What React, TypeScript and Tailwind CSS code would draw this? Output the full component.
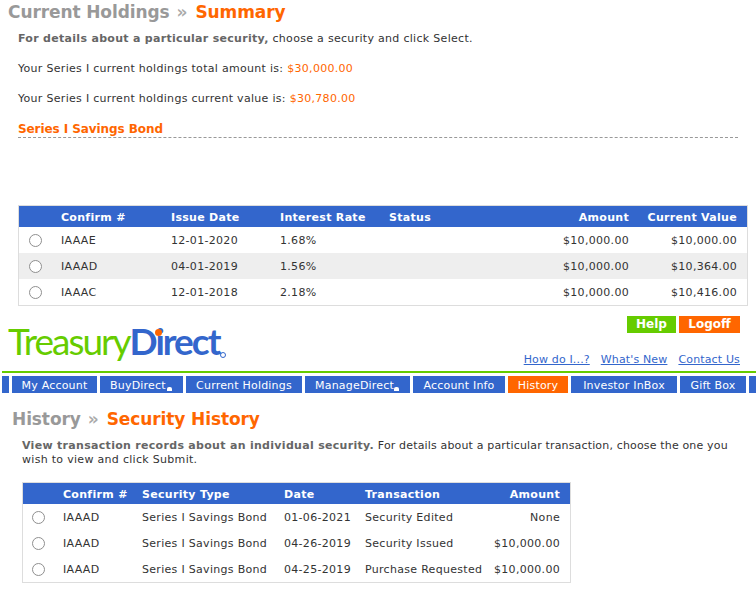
const holdings = [
  { confirm: "IAAAE", date: "12-01-2020", rate: "1.68%", amount: "$10,000.00", value: "$10,000.00" },
  { confirm: "IAAAD", date: "04-01-2019", rate: "1.56%", amount: "$10,000.00", value: "$10,364.00" },
  { confirm: "IAAAC", date: "12-01-2018", rate: "2.18%", amount: "$10,000.00", value: "$10,416.00" },
];

const history = [
  { date: "01-06-2021", transaction: "Security Edited", amount: "None" },
  { date: "04-26-2019", transaction: "Security Issued", amount: "$10,000.00" },
  { date: "04-25-2019", transaction: "Purchase Requested", amount: "$10,000.00" },
];

const nav = [
  { name: "My Account", w: "w-[85px]" },
  { name: "BuyDirect", w: "w-[83px]", arrow: true },
  { name: "Current Holdings", w: "w-[116px]" },
  { name: "ManageDirect", w: "w-[105px]", arrow: true },
  { name: "Account Info", w: "w-[92px]" },
  { name: "History", w: "w-[60px]", active: true },
  { name: "Investor InBox", w: "w-[106px]" },
  { name: "Gift Box", w: "w-[66px]" },
];

function Radio() {
  return <span className="block w-[13px] h-[13px] rounded-full border border-[#8f8f8f] bg-white" />;
}

function Crumb({ first, second }: { first: string; second: string }) {
  return (
    <h1 className="flex text-[17px] leading-[24px] font-bold tracking-[-0.1px] whitespace-nowrap">
      <span className="text-[#999999]">{first}</span>
      <span className="ml-[7px] mr-[8px] text-[#aaaaaa]">»</span>
      <span className="text-[#ff6600]">{second}</span>
    </h1>
  );
}

export default function App() {
  return (
    <div className="w-[756px] h-[592px] overflow-hidden bg-white text-[#333333] text-[11px] tracking-[0.3px] font-['DejaVu_Sans','Verdana',sans-serif]">
      {/* summary */}
      <div className="pl-2 h-[24px]">
        <Crumb first="Current Holdings" second="Summary" />
      </div>
      <div className="pl-[18px] pr-2">
        <p className="mt-[7px] leading-[16px]">
          <b className="text-[#666666]">For details about a particular security,</b> choose a security and click Select.
        </p>
        <p className="mt-[14px] leading-[16px]">
          Your Series I current holdings total amount is: <span className="text-[#ff6600]">$30,000.00</span>
        </p>
        <p className="mt-[14px] leading-[16px]">
          Your Series I current holdings current value is: <span className="text-[#ff6600]">$30,780.00</span>
        </p>
        <div className="mt-[13px] w-[720px] h-[18px] border-b border-dashed border-[#999999] text-[12px] leading-[18px] tracking-[-0.08px] font-bold text-[#ff6600]">
          Series I Savings Bond
        </div>
        <table className="mt-[67px] w-[730px] border border-[#dddddd] border-separate border-spacing-0 table-fixed">
          <thead>
            <tr className="h-[21px] bg-[#3366cc] text-white text-left">
              <th className="w-[42px]" />
              <th className="w-[110px] pt-[3px] font-bold">Confirm #</th>
              <th className="w-[109px] pt-[3px] font-bold">Issue Date</th>
              <th className="w-[109px] pt-[3px] font-bold">Interest Rate</th>
              <th className="w-[130px] pt-[3px] font-bold">Status</th>
              <th className="w-[120px] pt-[3px] pr-[10px] text-right font-bold">Amount</th>
              <th className="pt-[3px] pr-[10px] text-right font-bold">Current Value</th>
            </tr>
          </thead>
          <tbody>
            {holdings.map((row, i) => (
              <tr key={row.confirm} className={i === 1 ? "h-[26px] bg-[#eeeeee]" : "h-[26px]"}>
                <td className="pl-[10px]"><Radio /></td>
                <td className="pt-[2px]">{row.confirm}</td>
                <td className="pt-[2px]">{row.date}</td>
                <td className="pt-[2px]">{row.rate}</td>
                <td />
                <td className="pt-[2px] pr-[10px] text-right">{row.amount}</td>
                <td className="pt-[2px] pr-[10px] text-right">{row.value}</td>
              </tr>
            ))}
          </tbody>
        </table>
      </div>

      {/* header */}
      <div className="flex justify-between h-[65px] pl-2 pr-4">
        <div className="relative mt-[13px] h-[44px] text-[37px] leading-[44px] tracking-[-2px] whitespace-nowrap font-['Lato',sans-serif]">
          <span className="font-normal text-[#66cc00]">Treasury</span>
          <span className="font-bold text-[#3366cc]">Direct</span>
          <span className="absolute left-[147px] top-[10px] w-[7px] h-[7px] rounded-full bg-[#ff6600]" />
          <span className="absolute left-[212px] top-[33px] w-[6px] h-[6px] rounded-full border border-[#3366cc]" />
        </div>
        <div className="flex flex-col items-end pt-[10px]">
          <div className="flex gap-[3px] font-bold tracking-normal text-white text-[12px] leading-[17px]">
            <span className="w-[49px] h-[17px] bg-[#66cc00] text-center">Help</span>
            <span className="w-[61px] h-[17px] bg-[#ff6600] text-center">Logoff</span>
          </div>
          <div className="flex gap-[11px] mt-[19px] leading-[15px] tracking-[0.15px] text-[#3366cc] underline">
            <span>How do I...?</span>
            <span>What's New</span>
            <span>Contact Us</span>
          </div>
        </div>
      </div>

      {/* nav */}
      <div className="ml-[2px] h-[2px] bg-[#66cc00]" />
      <div className="flex gap-[3px] ml-[2px] mt-[3px] h-[17px] tracking-[0.2px] text-white leading-[19px] whitespace-nowrap">
        <span className="w-[7px] bg-[#3366cc] shrink-0" />
        {nav.map((item) => (
          <span
            key={item.name}
            className={`relative shrink-0 ${item.arrow ? "pl-[10px]" : "text-center"} ${item.w} ${item.active ? "bg-[#ff6600]" : "bg-[#3366cc]"}`}
          >
            {item.name}
            {item.arrow && <span className="absolute right-[11px] bottom-[2px] w-[5px] h-[4px] rounded-t-[2px] bg-white" />}
          </span>
        ))}
        <span className="w-[7px] bg-[#3366cc] shrink-0" />
      </div>

      {/* history */}
      <div className="pl-3 mt-[14px] h-[24px]">
        <Crumb first="History" second="Security History" />
      </div>
      <div className="pl-[22px]">
        <p className="mt-[8px] leading-[14px] whitespace-nowrap">
          <b className="text-[#666666]">View transaction records about an individual security.</b>{" "}
          <span className="tracking-[0.16px]">For details about a particular transaction, choose the one you</span>
          <br />
          wish to view and click Submit.
        </p>
        <table className="mt-[15px] w-[549px] border border-[#dddddd] border-separate border-spacing-0 table-fixed">
          <thead>
            <tr className="h-[21px] bg-[#3366cc] text-white text-left">
              <th className="w-[40px]" />
              <th className="w-[79px] pt-[3px] font-bold">Confirm #</th>
              <th className="w-[142px] pt-[3px] font-bold">Security Type</th>
              <th className="w-[81px] pt-[3px] font-bold">Date</th>
              <th className="w-[120px] pt-[3px] font-bold">Transaction</th>
              <th className="pt-[3px] pr-[10px] text-right font-bold">Amount</th>
            </tr>
          </thead>
          <tbody>
            {history.map((row) => (
              <tr key={row.date} className="h-[26px]">
                <td className="pl-[9px]"><Radio /></td>
                <td className="pt-[2px]">IAAAD</td>
                <td className="pt-[2px]">Series I Savings Bond</td>
                <td className="pt-[2px]">{row.date}</td>
                <td className="pt-[2px]">{row.transaction}</td>
                <td className="pt-[2px] pr-[10px] text-right">{row.amount}</td>
              </tr>
            ))}
          </tbody>
        </table>
      </div>
    </div>
  );
}
